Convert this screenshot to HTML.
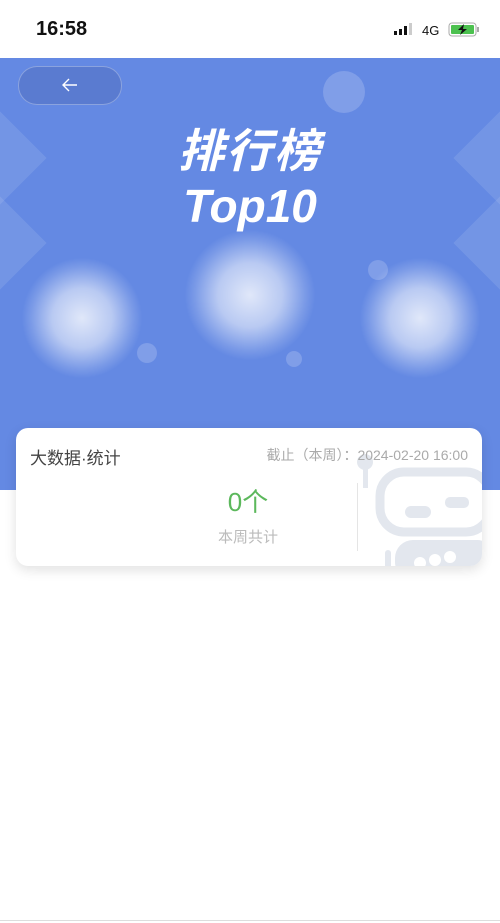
<!DOCTYPE html>
<html><head><meta charset="utf-8"><style>
body{margin:0;width:500px;height:923px;background:#fff;font-family:"Liberation Sans","Noto Sans CJK SC",sans-serif;position:relative;overflow:hidden}
.sb{height:58px;position:relative}
.time{position:absolute;left:36px;top:18px;font-size:20px;font-weight:bold;color:#111}
.ban{position:absolute;top:58px;left:0;width:500px;height:432px;background:#6489e3;overflow:hidden}
.g{position:absolute;border-radius:50%;background:radial-gradient(circle,rgba(255,255,255,.8) 0%,rgba(255,255,255,.55) 35%,rgba(255,255,255,.15) 60%,rgba(255,255,255,0) 71%)}
.b{position:absolute;border-radius:50%;background:rgba(255,255,255,.18)}
.d{position:absolute;width:80px;height:80px;transform:rotate(45deg);background:rgba(255,255,255,.1)}
.card{position:absolute;left:16px;top:428px;width:466px;height:138px;background:#fff;border-radius:12px;box-shadow:0 4px 12px rgba(0,0,0,.12);overflow:hidden}
</style></head><body>
<div class="sb"><div class="time">16:58</div>
<svg style="position:absolute;left:393px;top:22px" width="90" height="18">
<rect x="1" y="9" width="3" height="4" fill="#111"/><rect x="6" y="7" width="3" height="6" fill="#111"/><rect x="11" y="4" width="3" height="9" fill="#111"/><rect x="16" y="1" width="3" height="12" fill="#ccc"/>
<text x="29" y="13" font-size="13" font-family="Liberation Sans" fill="#111">4G</text>
<rect x="56" y="1" width="27" height="13" rx="3" fill="none" stroke="#aaa"/><rect x="58" y="3" width="23" height="9" rx="1" fill="#4cc14f"/><rect x="84" y="5" width="2" height="5" fill="#aaa"/>
<path d="M71 2 L65 8 H69 L67 13 L74 7 H70 Z" fill="#111"/></svg>
</div>
<div class="ban">
<div class="d" style="left:-50px;top:60px"></div>
<div class="d" style="left:-50px;top:145px"></div>
<div class="d" style="left:470px;top:60px"></div>
<div class="d" style="left:470px;top:145px"></div>
<div class="g" style="left:22px;top:200px;width:120px;height:120px"></div>
<div class="g" style="left:185px;top:172px;width:130px;height:130px"></div>
<div class="g" style="left:360px;top:200px;width:120px;height:120px"></div>
<div class="b" style="left:323px;top:13px;width:42px;height:42px"></div>
<div class="b" style="left:368px;top:202px;width:20px;height:20px"></div>
<div class="b" style="left:137px;top:285px;width:20px;height:20px"></div>
<div class="b" style="left:286px;top:293px;width:16px;height:16px"></div>
<div style="position:absolute;left:18px;top:8px;width:102px;height:37px;border-radius:19px;background:#5a7bd0;border:1px solid rgba(255,255,255,.3)"></div>
<svg style="position:absolute;left:60px;top:18px" width="20" height="18"><path d="M17 9H3M9 3L3 9L9 15" stroke="#fff" stroke-width="1.4" fill="none"/></svg>
<div style="position:absolute;left:0;width:500px;top:66px;text-align:center;color:#fff;font-size:46px;line-height:54px;font-weight:bold;font-style:italic;letter-spacing:2px">排行榜</div>
<div style="position:absolute;left:0;width:500px;top:122px;text-align:center;color:#fff;font-size:46px;line-height:52px;font-weight:bold;font-style:italic">Top10</div>
</div>
<div class="card">
<svg style="position:absolute;left:339px;top:22px" width="130" height="120"><g fill="#e3e7ee">
<circle cx="10" cy="12" r="8"/><rect x="8" y="16" width="5" height="22"/>
<rect x="25" y="22" width="110" height="60" rx="24" fill="none" stroke="#e3e7ee" stroke-width="9"/>
<rect x="50" y="56" width="26" height="12" rx="6"/><rect x="90" y="47" width="24" height="11" rx="5"/>
<rect x="40" y="90" width="100" height="40" rx="18"/><rect x="30" y="100" width="6" height="30" rx="3"/></g>
<g fill="#fff"><circle cx="65" cy="113" r="6"/><circle cx="80" cy="110" r="6"/><circle cx="95" cy="107" r="6"/></g></svg>
<div style="position:absolute;left:14px;top:16px;font-size:17px;color:#444">大数据·统计</div>
<div style="position:absolute;right:14px;top:17px;font-size:14px;color:#aaa">截止（本周）：2024-02-20 16:00</div>
<div style="position:absolute;left:341px;top:55px;width:1px;height:68px;background:#e5e5e5"></div>
<div style="position:absolute;left:150px;width:164px;top:54px;text-align:center;font-size:26px;color:#5cb85c">0个</div>
<div style="position:absolute;left:150px;width:164px;top:98px;text-align:center;font-size:15px;color:#bbb">本周共计</div>
</div>
<div style="position:absolute;left:0;top:920px;width:500px;height:1px;background:#ddd"></div>
</body></html>
